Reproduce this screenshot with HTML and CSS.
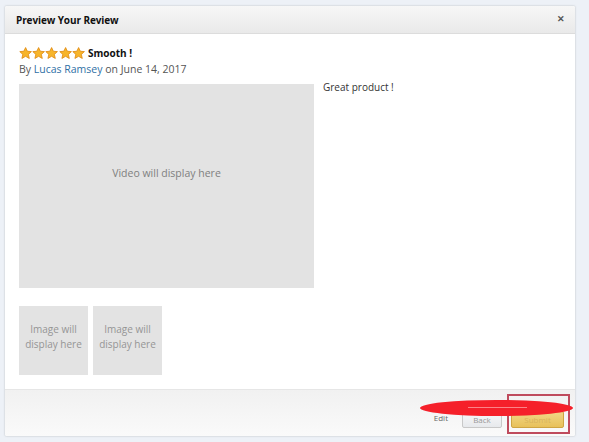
FILE: index.html
```html
<!DOCTYPE html>
<html lang="en">
<head>
<meta charset="utf-8">
<title>Preview Your Review</title>
<link rel="stylesheet" href="styles.css">
</head>
<body>
<div class="modal">
  <div class="modal-header">
    <h2 class="modal-title">Preview Your Review</h2>
    <span class="modal-close">&#x2715;</span>
  </div>
  <div class="modal-body">
    <div class="review-head">
      <span class="stars">
        <svg viewBox="0 0 14 13"><polygon points="7,0.6 8.9,4.6 13.3,5 10,8 11,12.4 7,10.1 3,12.4 4,8 0.7,5 5.1,4.6"/></svg>
        <svg viewBox="0 0 14 13"><polygon points="7,0.6 8.9,4.6 13.3,5 10,8 11,12.4 7,10.1 3,12.4 4,8 0.7,5 5.1,4.6"/></svg>
        <svg viewBox="0 0 14 13"><polygon points="7,0.6 8.9,4.6 13.3,5 10,8 11,12.4 7,10.1 3,12.4 4,8 0.7,5 5.1,4.6"/></svg>
        <svg viewBox="0 0 14 13"><polygon points="7,0.6 8.9,4.6 13.3,5 10,8 11,12.4 7,10.1 3,12.4 4,8 0.7,5 5.1,4.6"/></svg>
        <svg viewBox="0 0 14 13"><polygon points="7,0.6 8.9,4.6 13.3,5 10,8 11,12.4 7,10.1 3,12.4 4,8 0.7,5 5.1,4.6"/></svg>
      </span>
      <span class="review-title">Smooth !</span>
    </div>
    <div class="byline">By <a class="author">Lucas Ramsey</a> on June 14, 2017</div>
    <div class="review-main">
      <div class="media">
        <div class="video-box">Video will display here</div>
        <div class="thumbs">
          <div class="thumb">Image will display here</div>
          <div class="thumb">Image will display here</div>
        </div>
      </div>
      <p class="review-text">Great product !</p>
    </div>
  </div>
  <div class="modal-footer">
    <span class="link-back">Edit</span>
    <span class="btn btn-secondary">Back</span>
    <span class="btn btn-primary">Submit</span>
  </div>
  <div class="mark-scribble"></div>
  <div class="mark-box"></div>
</div>
</body>
</html>
```

FILE: styles.css
```css
html, body {
  margin: 0;
  height: 100%;
}

body {
  background: #edf1f7;
  font-family: "Open Sans", "Liberation Sans", Arial, sans-serif;
  color: #333;
  padding: 5px 0 0 4px;
  box-sizing: border-box;
}

.modal {
  position: relative;
  width: 572px;
  height: 432px;
  background: #fff;
  border: 1px solid #dde1e6;
  border-radius: 3px;
  box-sizing: border-box;
  display: flex;
  flex-direction: column;
  overflow: hidden;
  box-shadow: 0 0 2px rgba(0, 0, 0, 0.05);
}

.modal-header {
  height: 28px;
  flex: none;
  display: flex;
  align-items: center;
  justify-content: space-between;
  padding: 0 10px 0 11px;
  background: linear-gradient(#f7f7f7, #e9e9e9);
  border-bottom: 1px solid #dcdcdc;
  box-sizing: border-box;
}

.modal-title {
  margin: 0;
  font-size: 10px;
  font-weight: 700;
  color: #111;
  letter-spacing: -0.1px;
}

.modal-close {
  font-size: 9px;
  font-weight: 700;
  color: #555;
  margin-top: -3px;
}

.modal-body {
  flex: 1;
  padding: 12px 14px 0 14px;
}

.review-head {
  display: flex;
  align-items: center;
  height: 13px;
}

.stars {
  display: flex;
  margin-right: 3px;
}

.stars svg {
  width: 13.2px;
  height: 12px;
  fill: #f7b52b;
  stroke: #e08a12;
  stroke-width: 0.9;
}

.review-title {
  font-size: 10px;
  font-weight: 700;
  color: #111;
}

.byline {
  margin-top: 4px;
  font-size: 10.5px;
  color: #555;
  line-height: 12px;
}

.author {
  color: #2f6fa5;
}

.review-main {
  display: flex;
  gap: 9px;
  margin-top: 9px;
}

.media {
  width: 295px;
  flex: none;
}

.video-box {
  height: 204px;
  background: #e3e3e3;
  display: flex;
  justify-content: center;
  align-items: flex-start;
  padding-top: 82px;
  box-sizing: border-box;
  font-size: 10.5px;
  color: #808080;
}

.thumbs {
  display: flex;
  gap: 5px;
  margin-top: 18px;
}

.thumb {
  width: 69px;
  height: 69px;
  background: #e3e3e3;
  display: flex;
  align-items: center;
  justify-content: center;
  text-align: center;
  font-size: 10px;
  line-height: 15px;
  color: #959595;
  padding: 0 4px 7px;
  box-sizing: border-box;
}

.review-text {
  margin: -3px 0 0;
  font-size: 10px;
  color: #333;
  line-height: 12px;
}

.modal-footer {
  height: 47px;
  flex: none;
  display: flex;
  align-items: flex-end;
  justify-content: flex-end;
  gap: 8px;
  padding: 0 11px 8px 0;
  box-sizing: border-box;
  background: linear-gradient(#f1f1f1, #fafafa);
  border-top: 1px solid #e6e6e6;
}

.link-back {
  font-size: 8px;
  color: #666;
  margin-right: 6px;
  margin-bottom: 5px;
}

.btn {
  display: flex;
  align-items: center;
  justify-content: center;
  height: 17px;
  border-radius: 2px;
  font-size: 8px;
  box-sizing: border-box;
}

.btn-secondary {
  width: 40px;
  background: linear-gradient(#f7f8fa, #e7e9ec);
  border: 1px solid #c8c8c8;
  color: #999;
}

.btn-primary {
  width: 53px;
  background: linear-gradient(#f1d687, #e8c15a);
  border: 1px solid #cfa543;
  color: #d7b25a;
  margin-left: 1px;
}

/* red highlight annotations over the footer */
.mark-box {
  position: absolute;
  left: 502px;
  top: 388px;
  width: 63px;
  height: 40px;
  border: 2px solid #bf4b5d;
  box-sizing: border-box;
}

.mark-scribble {
  position: absolute;
  left: 415px;
  top: 394px;
  width: 153px;
  height: 16px;
  border-radius: 50%;
  background: #f5202a;
  z-index: 1;
}

.mark-scribble::after {
  content: "";
  position: absolute;
  left: 48px;
  right: 46px;
  top: 7px;
  height: 1px;
  background: rgba(255, 200, 200, 0.6);
}
```
